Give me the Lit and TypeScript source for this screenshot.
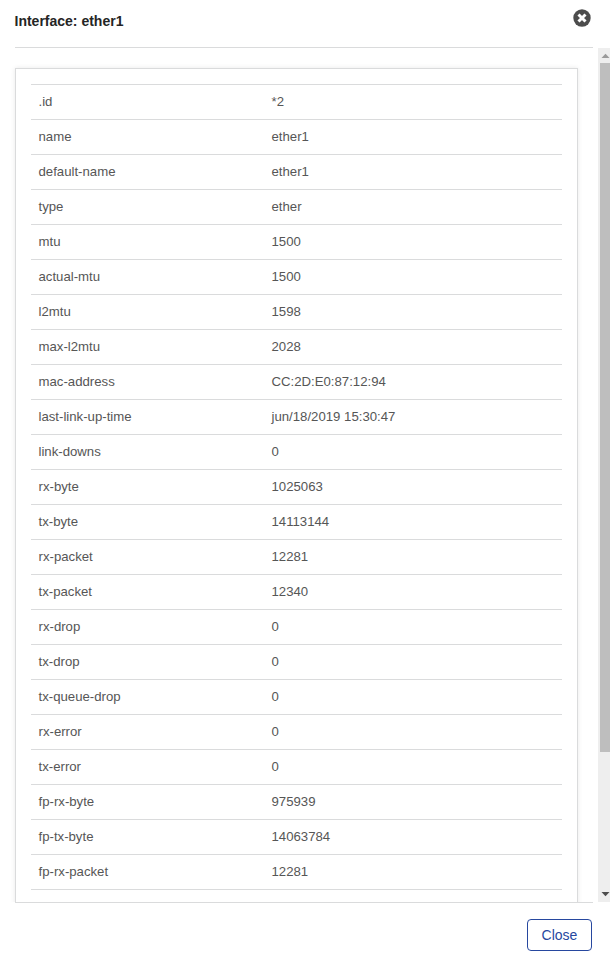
import { LitElement, html, css } from "lit";
import { customElement, property } from "lit/decorators.js";

const ROWS: [string, string][] = [
  [".id", "*2"],
  ["name", "ether1"],
  ["default-name", "ether1"],
  ["type", "ether"],
  ["mtu", "1500"],
  ["actual-mtu", "1500"],
  ["l2mtu", "1598"],
  ["max-l2mtu", "2028"],
  ["mac-address", "CC:2D:E0:87:12:94"],
  ["last-link-up-time", "jun/18/2019 15:30:47"],
  ["link-downs", "0"],
  ["rx-byte", "1025063"],
  ["tx-byte", "14113144"],
  ["rx-packet", "12281"],
  ["tx-packet", "12340"],
  ["rx-drop", "0"],
  ["tx-drop", "0"],
  ["tx-queue-drop", "0"],
  ["rx-error", "0"],
  ["tx-error", "0"],
  ["fp-rx-byte", "975939"],
  ["fp-tx-byte", "14063784"],
  ["fp-rx-packet", "12281"],
];

@customElement("detail-table")
export class DetailTable extends LitElement {
  @property({ attribute: false }) rows: [string, string][] = [];

  static styles = css`
    :host {
      display: block;
      border-bottom: 1px solid #dadbdc;
    }
    .row {
      display: grid;
      grid-template-columns: 233px 1fr;
      box-sizing: border-box;
      height: 35px;
      border-top: 1px solid #dadbdc;
      line-height: 34px;
    }
    .cell {
      padding-left: 7.5px;
      white-space: nowrap;
    }
  `;

  render() {
    return this.rows.map(
      ([k, v]) => html`<div class="row">
        <div class="cell">${k}</div>
        <div class="cell">${v}</div>
      </div>`
    );
  }
}

@customElement("app-root")
export class AppRoot extends LitElement {
  static styles = css`
    :host {
      display: flex;
      flex-direction: column;
      box-sizing: border-box;
      height: 956px;
      overflow: hidden;
      background: #fff;
      color: #565656;
      font-family: "Liberation Sans", Arial, sans-serif;
      font-size: 13.2px;
    }
    .header {
      display: flex;
      justify-content: space-between;
      box-sizing: border-box;
      height: 48px;
      flex: none;
      margin: 0 17px 0 15px;
      border-bottom: 1px solid #dadbdc;
    }
    .title {
      margin: 12px 0 0 -0.5px;
      font-size: 14px;
      line-height: 18px;
      font-weight: 700;
      color: #252525;
    }
    .dismiss {
      display: block;
      width: 18px;
      height: 18px;
      margin: 9px 2.5px 0 0;
    }
    .body {
      display: flex;
      flex: none;
      height: 854px;
      overflow: hidden;
    }
    .content {
      flex: 1;
      padding: 20px 20px 0 15px;
      overflow: hidden;
    }
    .card {
      box-sizing: border-box;
      height: 900px;
      padding: 15px;
      border: 1px solid #dadbdc;
      box-shadow: 0 0 5px rgba(0, 0, 0, 0.09);
    }
    .scrollbar {
      display: flex;
      flex-direction: column;
      align-items: flex-end;
      flex: none;
      width: 12px;
      background: #eee;
    }
    .arrow {
      display: block;
      width: 10px;
      height: 15px;
      flex: none;
    }
    .thumb {
      width: 10px;
      height: 689px;
      background: #bebebe;
    }
    .spacer {
      flex: 1;
    }
    .footer {
      display: flex;
      justify-content: flex-end;
      flex: 1;
      margin: 0 17px 0 15px;
      border-top: 1px solid #dadbdc;
    }
    .close {
      box-sizing: border-box;
      width: 65px;
      height: 32px;
      margin: 16px 1px 0 0;
      padding: 0;
      border: 1px solid #27489f;
      border-radius: 4px;
      background: #fff;
      color: #27489f;
      font: 14px/30px "Liberation Sans", Arial, sans-serif;
    }
  `;

  render() {
    return html`
      <div class="header">
        <div class="title">Interface: ether1</div>
        <svg class="dismiss" viewBox="0 0 18 18">
          <circle cx="9" cy="9" r="8.7" fill="#4d4d4d" />
          <path d="M5.5 5.5L12.5 12.5M12.5 5.5L5.5 12.5" stroke="#fff" stroke-width="3" />
        </svg>
      </div>
      <div class="body">
        <div class="content">
          <div class="card"><detail-table .rows=${ROWS}></detail-table></div>
        </div>
        <div class="scrollbar">
          <svg class="arrow" viewBox="0 0 10 15"><path d="M1.5 10L5.5 5.8L9.5 10Z" fill="#9a9a9a" /></svg>
          <div class="thumb"></div>
          <div class="spacer"></div>
          <svg class="arrow" viewBox="0 0 10 15"><path d="M1.5 5L9.5 5L5.5 9.2Z" fill="#4d4d4d" /></svg>
        </div>
      </div>
      <div class="footer"><button class="close">Close</button></div>
    `;
  }
}
